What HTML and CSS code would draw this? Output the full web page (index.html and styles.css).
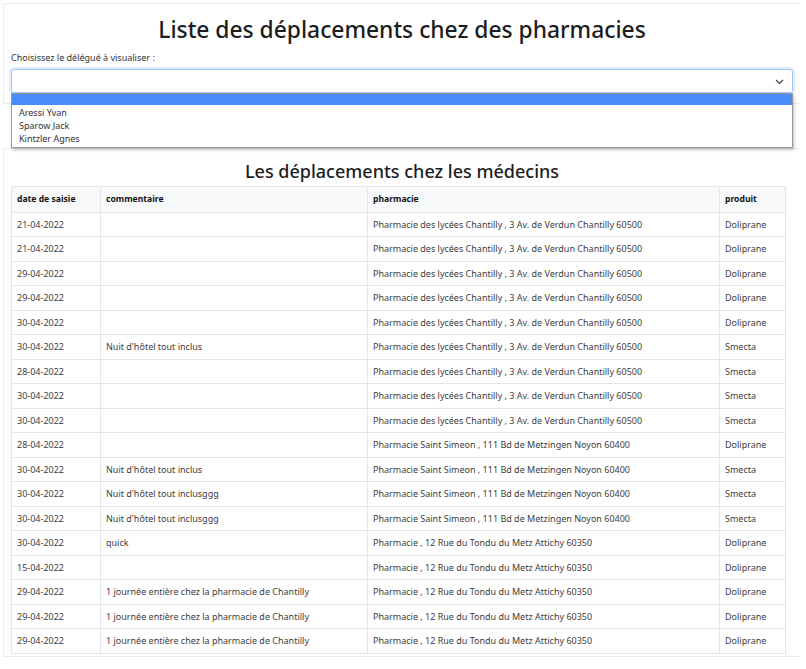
FILE: index.html
```html
<!DOCTYPE html>
<html lang="fr">
<head>
<meta charset="utf-8">
<title>Liste des déplacements</title>
<link rel="stylesheet" href="styles.css">
</head>
<body>
<div class="page">
  <section class="card card-top">
    <h1 class="title">Liste des déplacements chez des pharmacies</h1>
    <label class="label">Choisissez le délégué à visualiser :</label>
    <div class="select-wrap">
      <div class="select">
        <svg class="chev" width="9" height="6" viewBox="0 0 9 6"><path d="M1 1 L4.5 4.5 L8 1" fill="none" stroke="#444" stroke-width="1.2"/></svg>
      </div>
      <ul class="dropdown">
        <li class="opt opt-sel"></li>
        <li class="opt">Aressi Yvan</li>
        <li class="opt">Sparow Jack</li>
        <li class="opt">Kintzler Agnes</li>
      </ul>
    </div>
  </section>
  <section class="card card-table">
    <h2 class="subtitle">Les déplacements chez les médecins</h2>
    <table class="table">
      <colgroup><col class="c1"><col class="c2"><col class="c3"><col class="c4"></colgroup>
      <thead>
        <tr><th>date de saisie</th><th>commentaire</th><th>pharmacie</th><th>produit</th></tr>
      </thead>
      <tbody>
        <tr><td>21-04-2022</td><td></td><td>Pharmacie des lycées Chantilly , 3 Av. de Verdun Chantilly 60500</td><td>Doliprane</td></tr>
        <tr><td>21-04-2022</td><td></td><td>Pharmacie des lycées Chantilly , 3 Av. de Verdun Chantilly 60500</td><td>Doliprane</td></tr>
        <tr><td>29-04-2022</td><td></td><td>Pharmacie des lycées Chantilly , 3 Av. de Verdun Chantilly 60500</td><td>Doliprane</td></tr>
        <tr><td>29-04-2022</td><td></td><td>Pharmacie des lycées Chantilly , 3 Av. de Verdun Chantilly 60500</td><td>Doliprane</td></tr>
        <tr><td>30-04-2022</td><td></td><td>Pharmacie des lycées Chantilly , 3 Av. de Verdun Chantilly 60500</td><td>Doliprane</td></tr>
        <tr><td>30-04-2022</td><td>Nuit d'hôtel tout inclus</td><td>Pharmacie des lycées Chantilly , 3 Av. de Verdun Chantilly 60500</td><td>Smecta</td></tr>
        <tr><td>28-04-2022</td><td></td><td>Pharmacie des lycées Chantilly , 3 Av. de Verdun Chantilly 60500</td><td>Smecta</td></tr>
        <tr><td>30-04-2022</td><td></td><td>Pharmacie des lycées Chantilly , 3 Av. de Verdun Chantilly 60500</td><td>Smecta</td></tr>
        <tr><td>30-04-2022</td><td></td><td>Pharmacie des lycées Chantilly , 3 Av. de Verdun Chantilly 60500</td><td>Smecta</td></tr>
        <tr><td>28-04-2022</td><td></td><td>Pharmacie Saint Simeon , 111 Bd de Metzingen Noyon 60400</td><td>Doliprane</td></tr>
        <tr><td>30-04-2022</td><td>Nuit d'hôtel tout inclus</td><td>Pharmacie Saint Simeon , 111 Bd de Metzingen Noyon 60400</td><td>Smecta</td></tr>
        <tr><td>30-04-2022</td><td>Nuit d'hôtel tout inclusggg</td><td>Pharmacie Saint Simeon , 111 Bd de Metzingen Noyon 60400</td><td>Smecta</td></tr>
        <tr><td>30-04-2022</td><td>Nuit d'hôtel tout inclusggg</td><td>Pharmacie Saint Simeon , 111 Bd de Metzingen Noyon 60400</td><td>Smecta</td></tr>
        <tr><td>30-04-2022</td><td>quick</td><td>Pharmacie , 12 Rue du Tondu du Metz Attichy 60350</td><td>Doliprane</td></tr>
        <tr><td>15-04-2022</td><td></td><td>Pharmacie , 12 Rue du Tondu du Metz Attichy 60350</td><td>Doliprane</td></tr>
        <tr><td>29-04-2022</td><td>1 journée entière chez la pharmacie de Chantilly</td><td>Pharmacie , 12 Rue du Tondu du Metz Attichy 60350</td><td>Doliprane</td></tr>
        <tr><td>29-04-2022</td><td>1 journée entière chez la pharmacie de Chantilly</td><td>Pharmacie , 12 Rue du Tondu du Metz Attichy 60350</td><td>Doliprane</td></tr>
        <tr><td>29-04-2022</td><td>1 journée entière chez la pharmacie de Chantilly</td><td>Pharmacie , 12 Rue du Tondu du Metz Attichy 60350</td><td>Doliprane</td></tr>
      </tbody>
    </table>
  </section>
</div>
</body>
</html>
```
FILE: styles.css
```css
* { box-sizing: border-box; }
html, body { margin: 0; padding: 0; background: #fff; }
body {
  font-family: "Noto Sans", "Open Sans", sans-serif;
  color: #212529;
  font-size: 9px;
}
.page {
  padding: 3px 6px 0 3px;
  display: flex;
  flex-direction: column;
  gap: 44px;
}
.card {
  border: 1px solid #ebebeb;
  border-right: none;
  padding: 0 7px 10px 7px;
}
.card-top {
  height: 101px;
  padding-right: 7px;
}
.title {
  margin: 10px 0 0 0;
  text-align: center;
  font-size: 22.8px;
  font-weight: 500;
  line-height: 31px;
  color: #1d1d1f;
}
.label {
  display: block;
  margin-top: 6px;
  font-size: 9px;
  line-height: 14px;
  color: #333;
}
.select-wrap {
  position: relative;
  margin-top: 4px;
}
.select {
  height: 24px;
  border: 1px solid #9ec5fe;
  border-radius: 3px;
  box-shadow: 0 0 0 2px rgba(13,110,253,0.12);
  background: #fff;
  position: relative;
}
.chev {
  position: absolute;
  right: 8px;
  top: 9px;
}
.dropdown {
  position: absolute;
  left: 0;
  right: 0;
  top: 24px;
  margin: 0;
  padding: 0 0 2px 0;
  list-style: none;
  background: #fff;
  border: 1px solid #9a9a9a;
  box-shadow: 1px 2px 3px rgba(0,0,0,0.25);
  z-index: 5;
}
.opt {
  height: 13px;
  line-height: 13px;
  padding-left: 7px;
  font-size: 9px;
  color: #333;
}
.opt-sel {
  height: 11px;
  background: #478cf7;
  margin-bottom: 1px;
}
.card-table {
  padding-bottom: 2px;
}
.subtitle {
  margin: 10px 0 3px 0;
  text-align: center;
  font-size: 18px;
  font-weight: 500;
  line-height: 24px;
  color: #1d1d1f;
}
.table {
  width: 774px;
  border-collapse: collapse;
  table-layout: fixed;
  font-size: 9px;
}
.c1 { width: 89px; }
.c2 { width: 267px; }
.c3 { width: 352px; }
.c4 { width: 66px; }
.table th, .table td {
  border: 1px solid #e3e5e8;
  padding: 5px 5px;
  line-height: 13.5px;
  text-align: left;
  white-space: nowrap;
  overflow: hidden;
}
.table th {
  background: #f8f9fa;
  font-weight: 700;
  font-size: 8.6px;
  color: #111;
  padding-top: 5.5px;
  padding-bottom: 5.5px;
}
.table td { color: #3d3d3d; }
```
